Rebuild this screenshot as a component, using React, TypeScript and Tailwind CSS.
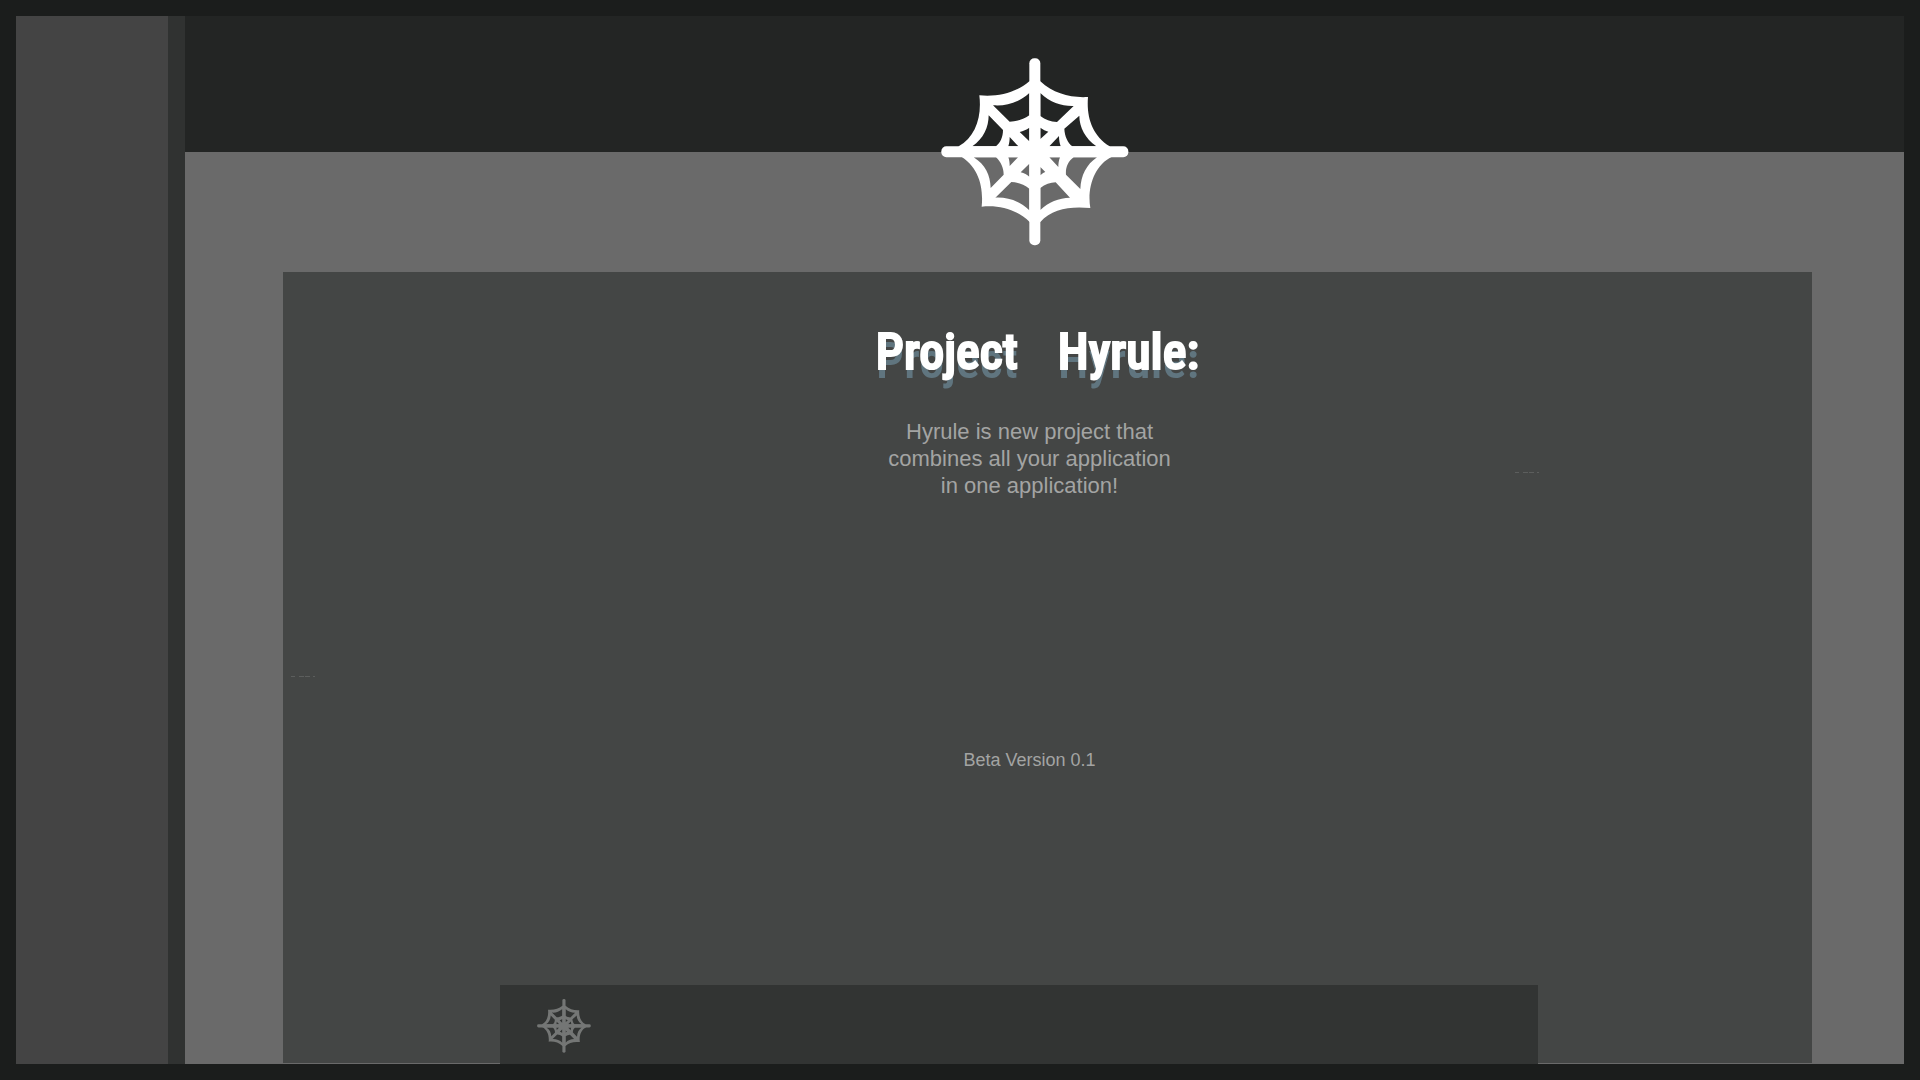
function WebLogo({ className }: { className: string }) {
  return (
    <svg viewBox="32 38 564 564" className={className} fill="currentColor" aria-hidden="true">
      <rect x="297" y="39" width="33" height="561" rx="15" />
      <rect x="33" y="303" width="561" height="33" rx="15" />
      <path
        fillRule="evenodd"
        d="M297 108 C260 140 205 156 147 150 C155 215 135 275 85 303 L85 330 C145 362 160 425 154 484 C205 478 260 492 298 530 L330 530 C365 490 420 482 480 488 C470 430 490 360 545 334 L538 303 C485 270 468 215 473 155 C420 158 370 145 330 108Z
        M297 143 C265 172 228 183 188 180 L238 229 C262 228 280 222 297 210Z
        M175 210 L218 254 C218 275 210 292 197 303 L126 303 C160 280 175 245 175 210Z
        M330 143 C360 172 395 183 430 182 L380 230 C360 229 345 223 330 212Z
        M447 211 L402 250 C403 273 412 292 426 303 L498 303 C465 280 447 245 447 211Z
        M130 336 L197 336 C212 350 220 368 220 388 L181 428 C180 390 165 358 130 336Z
        M243 410 C263 410 282 418 297 430 L297 495 C268 467 232 455 195 457Z
        M330 428 C344 417 360 412 376 411 L419 457 C385 458 355 470 330 494Z
        M407 388 C405 368 413 348 430 336 L500 336 C468 358 452 390 450 431Z
        M297 247 L297 288 L268 260 C279 257 288 253 297 247Z
        M238 275 L264 303 L234 303 C237 294 238 285 238 275Z
        M330 247 C338 253 346 256 354 259 L330 281Z
        M386 272 C386 284 388 294 391 303 L357 303Z
        M234 336 L263 336 L238 362 C238 353 237 344 234 336Z
        M297 355 L297 394 C290 388 282 384 271 381Z
        M330 365 L345 380 C340 382 335 385 330 390Z
        M357 336 L389 336 C385 346 384 356 384 365Z"
      />
    </svg>
  );
}

function FaintDashes({ className }: { className: string }) {
  return (
    <svg viewBox="0 0 24 2" className={className} fill="none" stroke="#5c5e5d" aria-hidden="true">
      <path d="M0 1.5h4M8 1.5h5M14 1.5h5M22 1.5h2" strokeWidth="1" />
    </svg>
  );
}

export default function App() {
  return (
    <div className="flex min-h-screen bg-[#1b1d1c] p-4 font-['Liberation_Sans',Arial,sans-serif]">
      <aside className="w-[169px] shrink-0 border-r-[17px] border-[#303231] bg-[#444444]" />
      <div className="flex min-w-0 flex-1 flex-col">
        <header className="relative z-10 flex h-[136px] justify-center bg-[#232524] pt-[42px] pr-5">
          <WebLogo className="size-[188px] shrink-0 text-white" />
        </header>
        <main className="flex flex-1 flex-col bg-[#6a6a6a] pt-[120px] pr-[92px] pb-px pl-[98px]">
          <section className="relative flex flex-1 flex-col bg-[#444645] pt-10">
            <h1 className="flex justify-center gap-10 pr-5 text-[50px] leading-[80px] font-medium text-white [-webkit-text-stroke:2px_white] [text-shadow:0_9px_0_#60757f] font-['Roboto_Condensed','Liberation_Sans_Narrow',sans-serif]">
              <span>Project</span>
              <span>Hyrule:</span>
            </h1>
            <p className="mt-[26px] pr-9 text-center text-[22px] leading-[27px] text-[#a3a4a3]">
              Hyrule is new project that
              <br />
              combines all your application
              <br />
              in one application!
            </p>
            <p className="mt-[249px] pr-9 text-center text-lg leading-6 text-[#a3a4a3]">Beta Version 0.1</p>
            <FaintDashes className="absolute top-[403px] left-2 w-6" />
            <FaintDashes className="absolute top-[199px] right-[273px] w-6" />
            <footer className="mt-auto mr-[274px] -mb-px ml-[217px] flex h-[79px] items-center bg-[#323433] pt-0.5 pl-[37px]">
              <WebLogo className="size-[54px] text-[#747675]" />
            </footer>
          </section>
        </main>
      </div>
    </div>
  );
}
